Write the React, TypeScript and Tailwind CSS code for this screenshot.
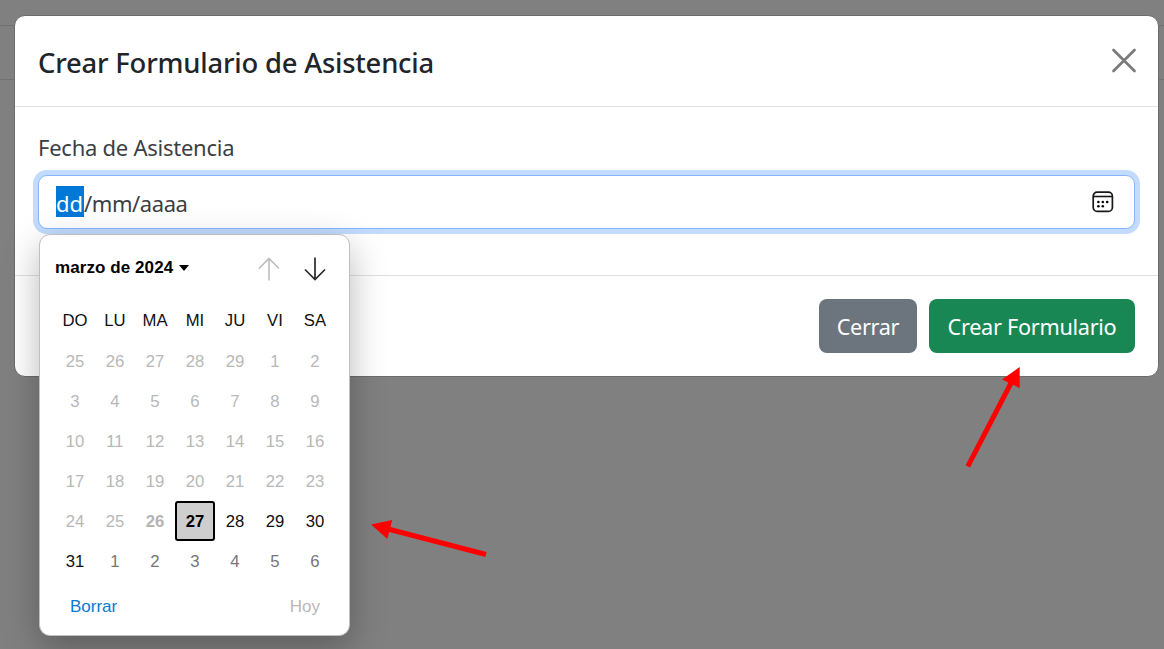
import React from "react";

const weekdays = ["DO", "LU", "MA", "MI", "JU", "VI", "SA"];
const days = [
  25, 26, 27, 28, 29, 1, 2, 3, 4, 5, 6, 7, 8, 9, 10, 11, 12, 13, 14, 15, 16,
  17, 18, 19, 20, 21, 22, 23, 24, 25, 26, 27, 28, 29, 30, 31, 1, 2, 3, 4, 5, 6,
];
const YESTERDAY = 30;
const SELECTED = 31;
const LAST = 35;

function dayClass(i: number) {
  if (i === SELECTED)
    return "rounded-[3px] border-2 border-black bg-[#cecece] pt-px font-bold text-black";
  if (i === YESTERDAY) return "pt-[2px] font-bold text-[#b4b4b4]";
  if (i < SELECTED) return "pt-[2px] text-[#b8b8b8]";
  if (i <= LAST) return "pt-[2px] text-[#101010]";
  return "pt-[2px] text-[#767676]";
}

function CalendarPopup() {
  return (
    <div className="absolute top-[58px] left-0 z-10 flex h-[402px] w-[311px] flex-col rounded-[11px] border border-[#bfbfbf] bg-white font-['Liberation_Sans',Arial,sans-serif] text-[16.7px] text-[#101010] shadow-[0_12px_36px_rgba(0,0,0,0.28)]">
      <div className="flex h-[65px] items-center pl-[15px]">
        <button className="flex items-center gap-[5px] pt-px text-[17px] font-bold text-black">
          <span className="w-[119px] text-left tracking-[0.08px] whitespace-nowrap">marzo de 2024</span>
          <svg width="10" height="6" viewBox="0 0 10 6">
            <path d="M0 0h10L5 6z" fill="#000" />
          </svg>
        </button>
        <svg className="mt-[3px] ml-[69px]" width="22" height="24" viewBox="0 0 22 24" fill="none" stroke="#bdbdbd" strokeWidth="1.6">
          <path d="M11 23.5V1.5M1 11.5L11 1.5l10 10" />
        </svg>
        <svg className="mt-[3px] ml-[24px]" width="22" height="24" viewBox="0 0 22 24" fill="none" stroke="#2b2b2b" strokeWidth="1.7">
          <path d="M11 .5v22M1 12.5l10 10 10-10" />
        </svg>
      </div>
      <div className="grid grid-cols-7 pr-[14px] pl-[15px]">
        {weekdays.map((d) => (
          <span key={d} className="flex h-[40.5px] items-center justify-center pt-px">{d}</span>
        ))}
        {days.map((d, i) => (
          <span key={i} className={"flex h-[40.1px] items-center justify-center " + dayClass(i)}>{d}</span>
        ))}
      </div>
      <div className="flex h-[49px] items-center justify-between pt-[3px] pr-[29px] pl-[30px]">
        <button className="text-[17px] text-[#0a78d4]">Borrar</button>
        <button className="text-[17px] text-[#b8b8b8]">Hoy</button>
      </div>
    </div>
  );
}

function CalendarIcon() {
  return (
    <svg width="22" height="22" viewBox="0 0 22 22" fill="none">
      <rect x="1.2" y="1.2" width="19.2" height="19.2" rx="4" stroke="#1a1a1a" strokeWidth="1.7" />
      <path d="M1.2 5.5h19.2" stroke="#1a1a1a" strokeWidth="1.6" />
      <g fill="#000">
        <circle cx="6.4" cy="11" r="1.3" />
        <circle cx="10.8" cy="11" r="1.3" />
        <circle cx="15.2" cy="11" r="1.3" />
        <circle cx="6.4" cy="15.2" r="1.3" />
        <circle cx="10.8" cy="15.2" r="1.3" />
      </g>
    </svg>
  );
}

export default function App() {
  return (
    <div className="grid h-[649px] w-[1164px] overflow-hidden bg-[#808080] font-['Noto_Sans','Open_Sans',sans-serif]">
      <div className="col-start-1 row-start-1">
        <div className="h-[26px] border-b border-[#707070]" />
        <div className="h-[54px] border-b border-[#707070]" />
      </div>
      <div className="relative col-start-1 row-start-1 mt-[15px] ml-[14px] flex h-[362px] w-[1145px] flex-col rounded-[11px] border border-[#6c6c6c] bg-white">
        <header className="flex h-[91px] items-center justify-between border-b border-[#e0e2e5] pr-[21px] pl-[23px]">
          <h1 className="pt-[3px] text-[27.4px] font-medium tracking-[-0.2px] text-[#212529]">Crear Formulario de Asistencia</h1>
          <button aria-label="Cerrar">
            <svg width="26" height="26" viewBox="0 0 26 26" fill="none" stroke="#7a7a7a" strokeWidth="2.7" strokeLinecap="round">
              <path d="M2.5 2l21 21M23.5 2l-21 21" />
            </svg>
          </button>
        </header>
        <div className="flex h-[168px] flex-col px-[23px] pt-[23px]">
          <label className="h-[45px] text-[22px] leading-[34px] tracking-[-0.25px] text-[#3b3f43]">
            <span>Fecha de Asistencia</span>
          </label>
          <div className="relative flex h-[54px] items-center justify-between rounded-[9px] border border-[#86b7fe] bg-white pr-[20px] pl-[17px] text-[22px] text-[#3b3f43] shadow-[0_0_0_5px_#c2dbfe]">
            <div className="mb-[2px] flex items-center">
              <span className="h-[31px] w-[28px] bg-[#0078d7] leading-[34px] text-white">dd</span>
              <span className="h-[31px] leading-[34px] tracking-[-0.42px]">/mm/aaaa</span>
            </div>
            <CalendarIcon />
            <CalendarPopup />
          </div>
        </div>
        <footer className="flex flex-1 items-start justify-end gap-[12px] border-t border-[#dee2e6] pt-[23px] pr-[23px]">
          <button className="flex h-[54px] w-[98px] items-center justify-center rounded-[8px] bg-[#6c757d] pt-[3px] text-[21.7px] tracking-[-0.35px] text-white">
            <span>Cerrar</span>
          </button>
          <button className="flex h-[54px] w-[206px] items-center justify-center rounded-[8px] bg-[#198754] pt-[3px] text-[21.7px] tracking-[-0.3px] text-white">
            <span>Crear Formulario</span>
          </button>
        </footer>
      </div>
      <svg className="pointer-events-none z-20 col-start-1 row-start-1" width="1164" height="649" viewBox="0 0 1164 649">
        <g stroke="#f00" strokeWidth="5" fill="#f00">
          <path d="M967.8 466.4L1011 383" />
          <path d="M1019.7 367V388.2L1002 379.4z" stroke="none" />
          <path d="M486 554.5L388 529" />
          <path d="M371 524.5L392.2 520L387.4 539z" stroke="none" />
        </g>
      </svg>
    </div>
  );
}
